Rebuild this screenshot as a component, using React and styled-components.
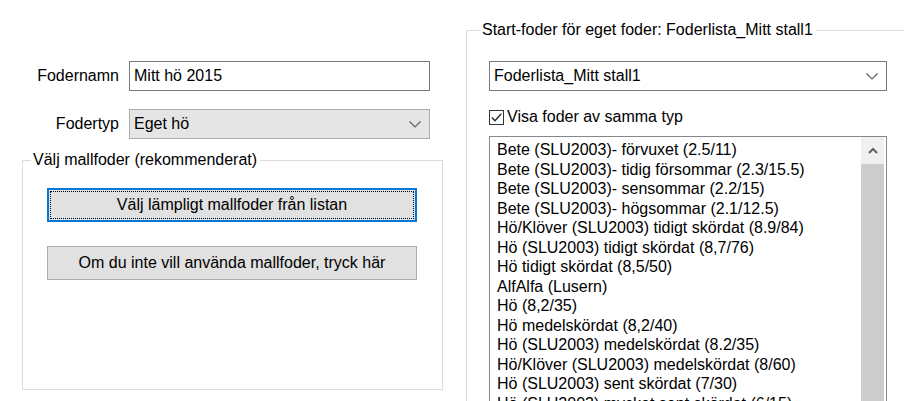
import React from 'react';
import styled, { createGlobalStyle } from 'styled-components';

const GlobalStyle = createGlobalStyle`
  html, body {
    margin: 0;
    padding: 0;
    background: #ffffff;
  }
  body {
    font-family: "Liberation Sans", Arial, sans-serif;
    font-size: 16px;
    color: #000000;
  }
`;

const Window = styled.div`
  display: flex;
  width: 904px;
  height: 401px;
  overflow: hidden;
  background: #ffffff;
`;

const LeftPane = styled.div`
  width: 466px;
  flex-shrink: 0;
  padding-top: 61px;
  box-sizing: border-box;
`;

const RightPane = styled.div`
  flex: 1;
  padding-top: 21px;
  box-sizing: border-box;
`;

const FormGrid = styled.div`
  display: grid;
  grid-template-columns: 119px 301px;
  column-gap: 10px;
  row-gap: 18px;
  align-items: center;
`;

const Label = styled.span`
  text-align: right;
  line-height: 18px;
`;

const TextBox = styled.div`
  height: 30px;
  box-sizing: border-box;
  border: 1px solid #7a7a7a;
  background: #ffffff;
  padding: 0 4px;
  display: flex;
  align-items: center;
`;

const Combo = styled.div`
  width: ${p => p.$width || 'auto'};
  height: 30px;
  box-sizing: border-box;
  border: 1px solid ${p => (p.$flat ? '#adadad' : '#7a7a7a')};
  background: ${p => (p.$flat ? '#e5e5e5' : '#ffffff')};
  padding: 0 8px 0 4px;
  display: flex;
  align-items: center;
  justify-content: space-between;
  margin-top: ${p => p.$top || '0'};
`;

const GroupBox = styled.fieldset`
  margin: ${p => p.$margin};
  width: ${p => p.$width};
  height: ${p => p.$height};
  box-sizing: border-box;
  border: 1px solid #dcdcdc;
  padding: 0;
  min-width: 0;
`;

const Legend = styled.legend`
  margin-left: ${p => p.$offset};
  padding: 0 3px 0 2px;
  line-height: 18px;
`;

const GroupBody = styled.div`
  padding-left: ${p => p.$padLeft};
`;

const Button = styled.div`
  position: relative;
  width: 370px;
  height: 34px;
  box-sizing: border-box;
  background: #e1e1e1;
  border: ${p => (p.$focused ? '2px solid #0078d7' : '1px solid #adadad')};
  display: flex;
  align-items: center;
  justify-content: center;
  margin-top: ${p => p.$top};

  &::after {
    content: '';
    display: ${p => (p.$focused ? 'block' : 'none')};
    position: absolute;
    inset: 1px;
    border: 1px dotted #000000;
  }
`;

const CheckRow = styled.div`
  display: flex;
  align-items: center;
  gap: 3px;
  height: 16px;
  margin-top: 18px;
  line-height: 16px;
`;

const CheckBox = styled.span`
  width: 15px;
  height: 15px;
  box-sizing: border-box;
  border: 1px solid #333333;
  background: #ffffff;
  display: flex;
  align-items: center;
  justify-content: center;
`;

const ListBox = styled.div`
  width: 398px;
  height: 300px;
  margin-top: 11px;
  box-sizing: border-box;
  border: 1px solid #828790;
  display: flex;
  padding-right: 2px;
`;

const Items = styled.div`
  flex: 1;
  padding: 3px 0 0 7px;
`;

const Item = styled.div`
  height: 19.5px;
  line-height: 19.5px;
  white-space: nowrap;
`;

const ScrollBar = styled.div`
  width: 23px;
  display: flex;
  flex-direction: column;
  background: #f0f0f0;
`;

const ScrollArrow = styled.div`
  height: 27px;
  display: flex;
  align-items: center;
  justify-content: center;
`;

const Thumb = styled.div`
  flex: 1;
  background: #cdcdcd;
`;

const Chevron = () => (
  <svg width="12" height="7" viewBox="0 0 12 7">
    <path d="M0.5 0.5 L6 6 L11.5 0.5" fill="none" stroke="#606060" strokeWidth="1.2" />
  </svg>
);

const Check = () => (
  <svg width="13" height="13" viewBox="0 0 13 13">
    <path d="M1.8 6.5 L5 9.7 L11.2 2.8" fill="none" stroke="#222222" strokeWidth="1.3" />
  </svg>
);

const UpCaret = () => (
  <svg width="10" height="7" viewBox="0 0 10 7">
    <path d="M1 6 L5 2 L9 6" fill="none" stroke="#606060" strokeWidth="2" />
  </svg>
);

const feeds = [
  'Bete (SLU2003)- förvuxet (2.5/11)',
  'Bete (SLU2003)- tidig försommar (2.3/15.5)',
  'Bete (SLU2003)- sensommar (2.2/15)',
  'Bete (SLU2003)- högsommar (2.1/12.5)',
  'Hö/Klöver (SLU2003) tidigt skördat (8.9/84)',
  'Hö (SLU2003) tidigt skördat (8,7/76)',
  'Hö tidigt skördat (8,5/50)',
  'AlfAlfa (Lusern)',
  'Hö (8,2/35)',
  'Hö medelskördat (8,2/40)',
  'Hö (SLU2003) medelskördat (8.2/35)',
  'Hö/Klöver (SLU2003) medelskördat (8/60)',
  'Hö (SLU2003) sent skördat (7/30)',
  'Hö (SLU2003) mycket sent skördat (6/15)',
];

export default function App() {
  return (
    <>
      <GlobalStyle />
      <Window>
        <LeftPane>
          <FormGrid>
            <Label>Fodernamn</Label>
            <TextBox>Mitt hö 2015</TextBox>
            <Label>Fodertyp</Label>
            <Combo $flat>
              <span>Eget hö</span>
              <Chevron />
            </Combo>
          </FormGrid>

          <GroupBox $margin="12px 0 0 22px" $width="421px" $height="239px">
            <Legend $offset="8px">Välj mallfoder (rekommenderat)</Legend>
            <GroupBody $padLeft="24px">
              <Button $focused $top="19px">Välj lämpligt mallfoder från listan</Button>
              <Button $top="24px">Om du inte vill använda mallfoder, tryck här</Button>
            </GroupBody>
          </GroupBox>
        </LeftPane>

        <RightPane>
          <GroupBox $margin="0" $width="500px" $height="420px">
            <Legend $offset="13px">Start-foder för eget foder: Foderlista_Mitt stall1</Legend>
            <GroupBody $padLeft="22px">
              <Combo $width="398px" $top="22px">
                <span>Foderlista_Mitt stall1</span>
                <Chevron />
              </Combo>
              <CheckRow>
                <CheckBox>
                  <Check />
                </CheckBox>
                <span>Visa foder av samma typ</span>
              </CheckRow>
              <ListBox>
                <Items>
                  {feeds.map(f => (
                    <Item key={f}>{f}</Item>
                  ))}
                </Items>
                <ScrollBar>
                  <ScrollArrow>
                    <UpCaret />
                  </ScrollArrow>
                  <Thumb />
                </ScrollBar>
              </ListBox>
            </GroupBody>
          </GroupBox>
        </RightPane>
      </Window>
    </>
  );
}
